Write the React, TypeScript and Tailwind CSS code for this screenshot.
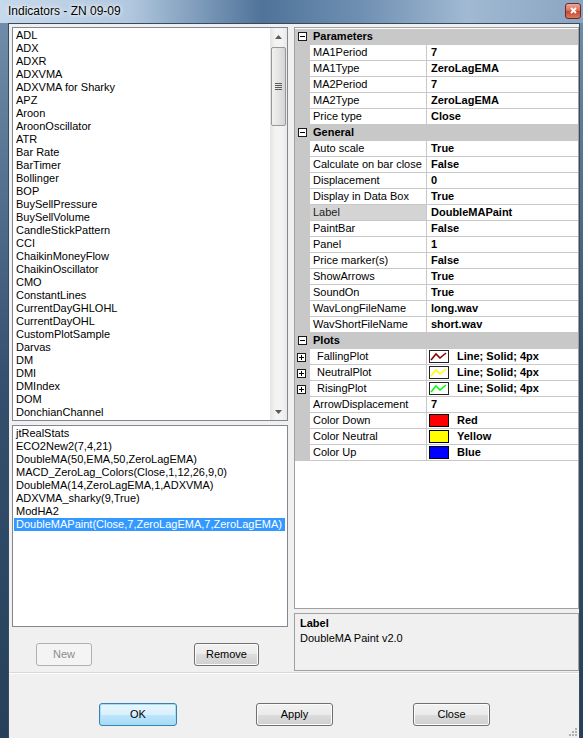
import { FC } from 'react';

const indicators = [
  'ADL', 'ADX', 'ADXR', 'ADXVMA', 'ADXVMA for Sharky', 'APZ', 'Aroon', 'AroonOscillator', 'ATR', 'Bar Rate',
  'BarTimer', 'Bollinger', 'BOP', 'BuySellPressure', 'BuySellVolume', 'CandleStickPattern', 'CCI',
  'ChaikinMoneyFlow', 'ChaikinOscillator', 'CMO', 'ConstantLines', 'CurrentDayGHLOHL', 'CurrentDayOHL',
  'CustomPlotSample', 'Darvas', 'DM', 'DMI', 'DMIndex', 'DOM', 'DonchianChannel',
];

const configured = [
  'jtRealStats',
  'ECO2New2(7,4,21)',
  'DoubleMA(50,EMA,50,ZeroLagEMA)',
  'MACD_ZeroLag_Colors(Close,1,12,26,9,0)',
  'DoubleMA(14,ZeroLagEMA,1,ADXVMA)',
  'ADXVMA_sharky(9,True)',
  'ModHA2',
  'DoubleMAPaint(Close,7,ZeroLagEMA,7,ZeroLagEMA)',
];

type Row =
  | { cat: string }
  | { name: string; value: string; plot?: string; color?: string; selected?: boolean };

const rows: Row[] = [
  { cat: 'Parameters' },
  { name: 'MA1Period', value: '7' },
  { name: 'MA1Type', value: 'ZeroLagEMA' },
  { name: 'MA2Period', value: '7' },
  { name: 'MA2Type', value: 'ZeroLagEMA' },
  { name: 'Price type', value: 'Close' },
  { cat: 'General' },
  { name: 'Auto scale', value: 'True' },
  { name: 'Calculate on bar close', value: 'False' },
  { name: 'Displacement', value: '0' },
  { name: 'Display in Data Box', value: 'True' },
  { name: 'Label', value: 'DoubleMAPaint', selected: true },
  { name: 'PaintBar', value: 'False' },
  { name: 'Panel', value: '1' },
  { name: 'Price marker(s)', value: 'False' },
  { name: 'ShowArrows', value: 'True' },
  { name: 'SoundOn', value: 'True' },
  { name: 'WavLongFileName', value: 'long.wav' },
  { name: 'WavShortFileName', value: 'short.wav' },
  { cat: 'Plots' },
  { name: 'FallingPlot', value: 'Line; Solid; 4px', plot: '#8b0000' },
  { name: 'NeutralPlot', value: 'Line; Solid; 4px', plot: '#ffff00' },
  { name: 'RisingPlot', value: 'Line; Solid; 4px', plot: '#00ff00' },
  { name: 'ArrowDisplacement', value: '7' },
  { name: 'Color Down', value: 'Red', color: '#ff0000' },
  { name: 'Color Neutral', value: 'Yellow', color: '#ffff00' },
  { name: 'Color Up', value: 'Blue', color: '#0000ff' },
];

const Box: FC<{ plus?: boolean }> = ({ plus }) => (
  <svg width="9" height="9" viewBox="0 0 9 9" className="shrink-0">
    <rect x="0.5" y="0.5" width="8" height="8" fill="#fff" stroke="#1a1a1a" />
    <line x1="2" y1="4.5" x2="7" y2="4.5" stroke="#000" />
    {plus && <line x1="4.5" y1="2" x2="4.5" y2="7" stroke="#000" />}
  </svg>
);

const Arrow: FC<{ down?: boolean }> = ({ down }) => (
  <div className="h-[17px] flex items-center justify-center">
    <svg width="7" height="4" viewBox="0 0 7 4">
      <polygon points={down ? '0,0 7,0 3.5,4' : '0,4 7,4 3.5,0'} fill="#5a5a5a" />
    </svg>
  </div>
);

const WinButton: FC<{ label: string; w: string; primary?: boolean; disabled?: boolean; className?: string }> = ({
  label,
  w,
  primary,
  disabled,
  className,
}) => (
  <div
    className={`${w} h-[23px] shrink-0 rounded-[3px] border flex items-center justify-center ${
      disabled
        ? 'border-[#adb2b5] bg-[#f4f4f4] text-[#8d8d8d]'
        : primary
          ? 'border-[#3c7fb1] bg-[linear-gradient(#eaf6fd,#d9f0fc_50%,#bee6fd_50%,#a7d9f5)] shadow-[inset_0_0_0_1px_#9fe0fb] text-black'
          : 'border-[#707070] bg-[linear-gradient(#f2f2f2,#ebebeb_50%,#dddddd_50%,#cfcfcf)] shadow-[inset_0_0_0_1px_#fcfcfc] text-black'
    } ${className ?? ''}`}
  >
    {label}
  </div>
);

export default function App() {
  return (
    <div className="w-[583px] h-[738px] flex flex-col overflow-hidden bg-[linear-gradient(90deg,#c7d9ec,#b2c8df_22%,#4f7399_45%,#6f90b2_62%,#a1b9d2_80%,#8aa5c2)] font-['Liberation_Sans',Arial,sans-serif] text-[11px] leading-[13px] text-black">
      {/* title bar */}
      <div className="h-[23px] shrink-0 flex items-center justify-between pl-[8px] pr-[2px]">
        <span className="text-[12px] text-black [text-shadow:0_0_6px_#ffffff,0_0_3px_#ffffff]">Indicators - ZN 09-09</span>
        <div className="w-[16px] h-[16px] mb-[2px] rounded-[3px] border border-[#6b2a22] bg-[linear-gradient(#eaa99b,#d86a55_50%,#c4452f_50%,#d87a5c)] flex items-center justify-center">
          <svg width="7" height="7" viewBox="0 0 7 7">
            <path d="M1 1 L6 6 M6 1 L1 6" stroke="#fff" strokeWidth="1.8" />
          </svg>
        </div>
      </div>

      {/* body with side frames */}
      <div className="flex-1 flex pl-[8px] pr-[3px] bg-[linear-gradient(180deg,#6f8cab,#34506e_50%,#26405a)]">
        <div className="flex-1 flex flex-col bg-[#f0f0f0] border-l border-t border-r border-[#3a4a5c]">
          {/* split area */}
          <div className="h-[649px] flex pt-[3px] pl-[3px] border-b border-[#d9d9d9]">
            {/* left column */}
            <div className="w-[276px] flex flex-col">
              <div className="h-[394px] border border-[#828790] bg-white flex">
                <div className="flex-1 pt-[1px] pl-[3px] overflow-hidden">
                  {indicators.map((i) => (
                    <div key={i} className="h-[13px] whitespace-nowrap">
                      {i}
                    </div>
                  ))}
                </div>
                <div className="w-[17px] flex flex-col bg-[linear-gradient(90deg,#e3e3e3,#f3f3f3_30%,#f3f3f3_70%,#e8e8e8)]">
                  <Arrow />
                  <div className="mt-[2px] mx-[1px] h-[79px] rounded-[2px] border border-[#979797] bg-[linear-gradient(90deg,#f1f1f1,#e4e4e4_50%,#d4d4d4)] flex flex-col items-center justify-center gap-[1px]">
                    <div className="w-[7px] h-[1px] bg-[#5a5a5a]" />
                    <div className="w-[7px] h-[1px] bg-[#5a5a5a]" />
                    <div className="w-[7px] h-[1px] bg-[#5a5a5a]" />
                    <div className="w-[7px] h-[1px] bg-[#5a5a5a]" />
                  </div>
                  <div className="flex-1" />
                  <Arrow down />
                </div>
              </div>
              <div className="mt-[4px] h-[202px] border border-[#828790] bg-white pt-[1px] overflow-hidden">
                {configured.map((c, idx) => (
                  <div
                    key={c}
                    className={`h-[13px] ml-[1px] mr-[2px] pl-[2px] whitespace-nowrap ${
                      idx === configured.length - 1 ? 'bg-[#3399ff] text-white' : ''
                    }`}
                  >
                    {c}
                  </div>
                ))}
              </div>
              <div className="mt-[16px] flex">
                <WinButton label="New" w="w-[56px]" disabled className="ml-[24px]" />
                <WinButton label="Remove" w="w-[65px]" className="ml-[102px]" />
              </div>
            </div>

            {/* right column */}
            <div className="w-[285px] ml-[6px] flex flex-col">
              <div className="h-[582px] border border-[#a0a0a0] bg-white pt-[1px] flex flex-col">
                {rows.map((r, idx) =>
                  'cat' in r ? (
                    <div key={idx} className="h-[16px] flex items-center bg-[#c8c8c8] border-b border-[#c8c8c8]">
                      <div className="w-[15px] flex pl-[3px]">
                        <Box />
                      </div>
                      <span className="pl-[3px] font-bold">{r.cat}</span>
                    </div>
                  ) : (
                    <div key={idx} className="h-[16px] flex">
                      <div className="w-[15px] bg-[#c8c8c8] flex items-center pl-[2px]">{r.plot && <Box plus />}</div>
                      <div
                        className={`w-[117px] border-b border-r border-[#c8c8c8] flex items-center whitespace-nowrap ${
                          r.plot ? 'pl-[7px]' : 'pl-[3px]'
                        } ${r.selected ? 'bg-[#d4d4d4] text-[#222]' : ''}`}
                      >
                        {r.name}
                      </div>
                      <div className="flex-1 border-b border-[#c8c8c8] flex items-center pl-[2px] font-bold whitespace-nowrap">
                        {r.plot && (
                          <svg width="20" height="13" viewBox="0 0 20 13" className="mr-[8px] shrink-0">
                            <rect x="0.5" y="0.5" width="19" height="12" fill="#fff" stroke="#222" />
                            <polyline points="2,10 7,4 11,8 17,3" fill="none" stroke={r.plot} strokeWidth="1.6" />
                          </svg>
                        )}
                        {r.color && (
                          <div
                            className="w-[20px] h-[13px] mr-[8px] border border-black shrink-0"
                            style={{ backgroundColor: r.color }}
                          />
                        )}
                        <span className={r.plot || r.color ? '' : 'pl-[2px]'}>{r.value}</span>
                      </div>
                    </div>
                  ),
                )}
              </div>
              <div className="mt-[4px] h-[58px] border border-[#a0a0a0] bg-[#f0f0f0] pt-[3px] pl-[5px]">
                <div className="font-bold">Label</div>
                <div className="mt-[2px]">DoubleMA Paint v2.0</div>
              </div>
            </div>
          </div>

          {/* bottom buttons */}
          <div className="flex-1 relative border-t border-white pt-[29px]">
            <div className="flex">
              <WinButton label="OK" w="w-[78px]" primary className="ml-[90px]" />
              <WinButton label="Apply" w="w-[77px]" className="ml-[79px]" />
              <WinButton label="Close" w="w-[77px]" className="ml-[80px]" />
            </div>
            <div className="absolute right-[2px] bottom-[2px] grid grid-cols-3 gap-[1px]">
              {[0, 0, 1, 0, 1, 1, 1, 1, 1].map((v, i) => (
                <div key={i} className={`w-[2px] h-[2px] ${v ? 'bg-[#b0b0b0]' : ''}`} />
              ))}
            </div>
          </div>
        </div>
      </div>
    </div>
  );
}
